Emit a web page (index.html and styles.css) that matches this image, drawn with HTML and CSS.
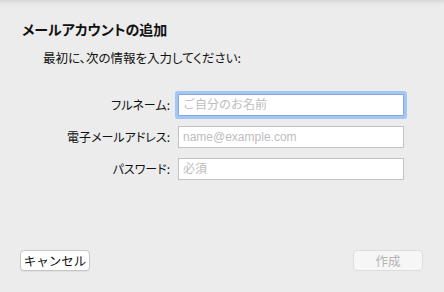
FILE: index.html
```html
<!DOCTYPE html>
<html lang="ja">
<head>
    <meta charset="UTF-8">
    <meta name="viewport" content="width=device-width, initial-scale=1.0">
    <title>メールアカウントの追加</title>
    <link rel="stylesheet" href="styles.css">
</head>
<body>
    <div class="sheet">
        <h1 class="title">メールアカウントの追加</h1>
        <p class="intro">最初に、次の情報を入力してください:</p>

        <form class="account-form">
            <label for="fullname">フルネーム:</label>
            <input type="text" id="fullname" class="focused" placeholder="ご自分のお名前">

            <label for="email">電子メールアドレス:</label>
            <input type="text" id="email" placeholder="name@example.com">

            <label for="password">パスワード:</label>
            <input type="password" id="password" placeholder="必須">
        </form>

        <div class="button-row">
            <button type="button" class="btn">キャンセル</button>
            <button type="button" class="btn btn-disabled" disabled>作成</button>
        </div>
    </div>
</body>
</html>
```

FILE: styles.css
```css
html, body {
    margin: 0;
    height: 100%;
}

body {
    font-family: "Noto Sans CJK JP", "Liberation Sans", sans-serif;
    font-feature-settings: "palt";
    background: linear-gradient(#d6d6d6 0, #e6e6e6 3px, #ececec 7px, #ececec 100%);
    color: #111;
}

.sheet {
    height: 292px;
    box-sizing: border-box;
    padding: 19px 20px 0 22px;
    display: flex;
    flex-direction: column;
}

.title {
    font-size: 14px;
    font-weight: bold;
    margin: 0;
    line-height: 20px;
}

.intro {
    font-size: 12.5px;
    margin: 10px 0 0 21px;
    line-height: 18px;
}

.account-form {
    display: grid;
    grid-template-columns: 148px 226px;
    column-gap: 8px;
    row-gap: 10px;
    align-items: center;
    margin-top: 27px;
}

.account-form label {
    text-align: right;
    font-size: 12px;
    line-height: 22px;
}

.account-form input {
    height: 22px;
    box-sizing: border-box;
    border: 1px solid #c3c3c3;
    background: #fff;
    padding: 0 4px;
    font-family: "Liberation Sans", "Noto Sans CJK JP", sans-serif;
    font-size: 12px;
    outline: none;
}

.account-form input::placeholder {
    color: #bdbdbd;
    font-family: "Liberation Sans", "Noto Sans CJK JP", sans-serif;
}

.account-form input.focused {
    border-color: #86a9d8;
    box-shadow: 0 0 0 3px #a3c6f4;
    border-radius: 1px;
}

.button-row {
    margin-top: auto;
    margin-bottom: 21px;
    margin-left: -2px;
    margin-right: 1px;
    display: flex;
    justify-content: space-between;
}

.btn {
    width: 70px;
    height: 21px;
    box-sizing: border-box;
    border: 1px solid #c6c6c6;
    border-radius: 4px;
    background: #fff;
    font-family: "Noto Sans CJK JP", sans-serif;
    font-size: 12.5px;
    color: #111;
    padding: 0;
    line-height: 18px;
    box-shadow: 0 1px 0 rgba(0, 0, 0, 0.05);
}

.btn-disabled {
    background: #f6f6f6;
    border-color: #dcdcdc;
    color: #b4b4b4;
    box-shadow: none;
}
```
